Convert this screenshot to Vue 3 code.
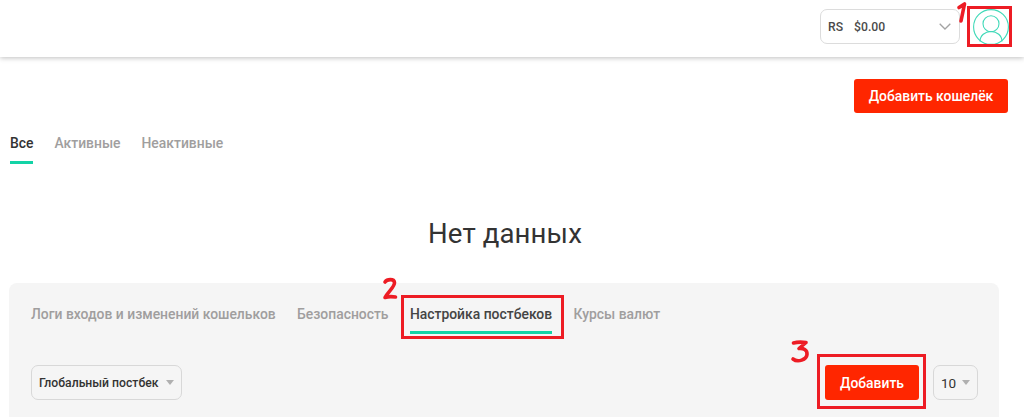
<script setup>
const topTabs = [
  { label: 'Все', active: true },
  { label: 'Активные', active: false },
  { label: 'Неактивные', active: false }
]
const cardTabs = [
  { label: 'Логи входов и изменений кошельков', active: false },
  { label: 'Безопасность', active: false },
  { label: 'Настройка постбеков', active: true },
  { label: 'Курсы валют', active: false }
]
</script>

<template>
  <div class="page">
    <header class="topbar">
      <div class="wallet">
        <span class="cur">RS</span>
        <span class="sum">$0.00</span>
        <svg class="chev" width="12" height="7" viewBox="0 0 12 7"><path d="M.7.7L6 6l5.300-5.300" fill="none" stroke="#a3a3a3" stroke-width="1.3" /></svg>
      </div>
      <div class="avatar">
        <svg width="36" height="36" viewBox="0 0 36 36">
          <circle cx="18" cy="18" r="17.400" fill="none" stroke="#3fd9b8" stroke-width="1.100" />
          <circle cx="18" cy="14.700" r="8" fill="none" stroke="#3fd9b8" stroke-width="1.100" />
          <path d="M7 32.500c0-6 5-10 11-10s11 4 11 10" fill="none" stroke="#3fd9b8" stroke-width="1.100" />
        </svg>
      </div>
    </header>

    <div class="actions">
      <button class="btn wide">Добавить кошелёк</button>
    </div>

    <nav class="tabs">
      <span v-for="t in topTabs" :key="t.label" class="tab" :class="{ active: t.active }">{{ t.label }}</span>
    </nav>

    <h2 class="empty">Нет данных</h2>

    <section class="card">
      <nav class="card-tabs">
        <span v-for="t in cardTabs" :key="t.label" class="card-tab" :class="{ active: t.active }">{{ t.label }}</span>
      </nav>
      <div class="controls">
        <div class="select global">Глобальный постбек<i class="caret"></i></div>
        <div class="right">
          <button class="btn add">Добавить</button>
          <div class="select size">10<i class="caret"></i></div>
        </div>
      </div>
    </section>

    <!-- пометки поверх скриншота -->
    <div class="mark m1"></div>
    <div class="mark m2"></div>
    <div class="mark m3"></div>
    <svg class="note n1" width="12" height="24" viewBox="0 0 12 24"><path d="M3 6.500l5.500-3.500L5 20" fill="none" stroke="#ed1c24" stroke-width="3.600" stroke-linecap="round" stroke-linejoin="round" /></svg>
    <svg class="note n2" width="16" height="24" viewBox="0 0 16 24"><path d="M3 5C5 2 12 1.500 12.500 5.500S6 15 3 20.500C6 19.500 10 19.500 13.500 20" fill="none" stroke="#ed1c24" stroke-width="3.600" stroke-linecap="round" stroke-linejoin="round" /></svg>
    <svg class="note n3" width="20" height="26" viewBox="0 0 20 26"><path d="M3.500 4C7 3 12 3 16 3.500l-7 6c4-.5 8.500 1 8 6S8 24 3 20" fill="none" stroke="#ed1c24" stroke-width="3.600" stroke-linecap="round" stroke-linejoin="round" /></svg>
  </div>
</template>

<style>
html, body {
  margin: 0;
  background: #fff;
  overflow: hidden;
}
</style>

<style scoped>
.page {
  position: relative;
  width: 1024px;
  height: 417px;
  overflow: hidden;
  font-family: Roboto, "Liberation Sans", sans-serif;
  color: #333;
}

.topbar {
  height: 57px;
  box-sizing: border-box;
  display: flex;
  justify-content: flex-end;
  align-items: flex-start;
  gap: 13px;
  padding: 9px 15px 0 0;
  box-shadow: 0 1px 5px rgba(0, 0, 0, 0.25);
}

.wallet {
  width: 140px;
  height: 35px;
  box-sizing: border-box;
  display: flex;
  align-items: center;
  border: 1px solid #dcdcdc;
  border-radius: 7px;
  padding: 0 8px 0 7px;
  font-size: 12.200px;
  font-weight: 500;
  color: #4a4a4a;
}

.sum {
  margin-left: 11px;
}

.chev {
  margin-left: auto;
}

.avatar {
  width: 36px;
  height: 36px;
}

.actions {
  display: flex;
  justify-content: flex-end;
  padding: 22px 16px 0 0;
}

.btn {
  border: 0;
  border-radius: 3px;
  background: #ff2600;
  color: #fff;
  font-family: inherit;
  font-size: 13.900px;
  font-weight: 500;
  padding: 0;
}

.wide {
  width: 154px;
  height: 34px;
}

.tabs {
  display: flex;
  gap: 21px;
  padding: 21px 0 0 10px;
}

.tab {
  position: relative;
  font-size: 13.900px;
  font-weight: 500;
  line-height: 18px;
  color: #a09e9e;
  padding-bottom: 9px;
}

.tab.active {
  color: #333;
  border-bottom: 3px solid #13d3a6;
}

.empty {
  margin: 0;
  padding-top: 50px;
  text-align: center;
  font-size: 27.600px;
  font-weight: 400;
  line-height: 40px;
  letter-spacing: 0.1px;
  color: #333;
  transform: translateX(-7px);
}

.card {
  box-sizing: border-box;
  width: 990px;
  height: 160px;
  margin: 29px 0 0 9px;
  padding: 21px 21px 0 22px;
  background: #f5f5f5;
  border-radius: 8px;
}

.card-tabs {
  display: flex;
  gap: 21.400px;
}

.card-tab {
  font-size: 13.900px;
  font-weight: 500;
  line-height: 20px;
  color: #a09e9e;
  padding-bottom: 7px;
}

.card-tab.active {
  color: #444;
  border-bottom: 3px solid #13d3a6;
}

.controls {
  display: flex;
  justify-content: space-between;
  margin-top: 31px;
}

.right {
  display: flex;
  gap: 14px;
}

.select {
  height: 35px;
  box-sizing: border-box;
  display: flex;
  align-items: center;
  justify-content: space-between;
  border: 1px solid #d8d8d8;
  border-radius: 7px;
  padding: 0 7px;
  font-size: 12.200px;
  font-weight: 500;
  color: #333;
}

.global {
  width: 151px;
}

.size {
  width: 45px;
  font-size: 13.500px;
  font-weight: 400;
}

.caret {
  width: 0;
  height: 0;
  border-left: 4.500px solid transparent;
  border-right: 4.500px solid transparent;
  border-top: 5px solid #b0b0b0;
}

.add {
  width: 94px;
  height: 35px;
}

.mark {
  position: absolute;
  box-sizing: border-box;
  border: 3px solid #ed1c24;
}

.m1 {
  left: 967px;
  top: 6px;
  width: 45px;
  height: 41px;
}

.m2 {
  left: 401px;
  top: 295px;
  width: 163px;
  height: 44px;
}

.m3 {
  left: 817px;
  top: 354px;
  width: 109px;
  height: 55px;
}

.note {
  position: absolute;
}

.n1 {
  left: 956px;
  top: 1px;
}

.n2 {
  left: 382px;
  top: 277px;
}

.n3 {
  left: 790px;
  top: 339px;
}
</style>
